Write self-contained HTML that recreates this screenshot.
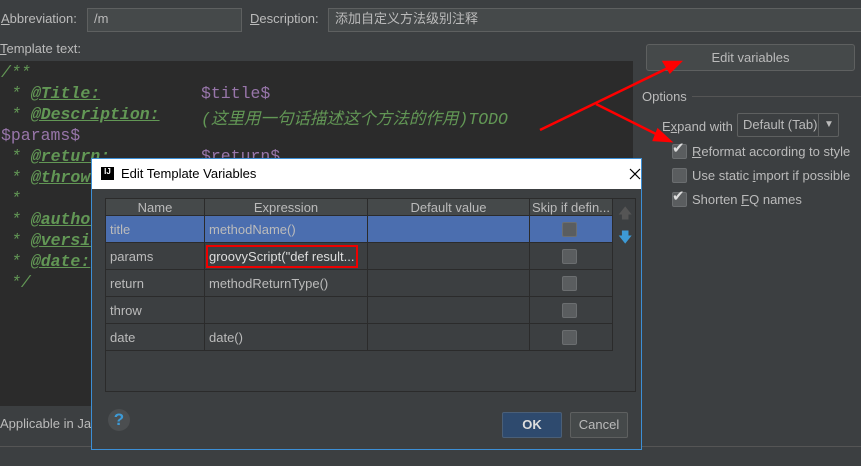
<!DOCTYPE html>
<html><head><meta charset="utf-8"><style>
body{margin:0;width:861px;height:466px;background:#3c3f41;font-family:"Liberation Sans","Noto Sans CJK SC",sans-serif;font-size:13px;color:#bbbbbb;position:relative;overflow:hidden}
.a{position:absolute;white-space:nowrap}
.inp{position:absolute;background:#45494a;border:1px solid #5e6060;box-sizing:border-box;padding-left:6px;line-height:20px;color:#bbb}
.ed{position:absolute;left:0;top:61px;width:633px;height:345px;background:#2b2b2b}
.code{position:absolute;font-family:"Liberation Mono","Noto Sans CJK SC",monospace;font-size:16.5px;white-space:nowrap;font-style:italic;color:#629755}
.tag{font-weight:bold;text-decoration:underline}
.var{color:#9876aa;font-style:normal}
.cb{position:absolute;width:13px;height:13px;background:#5a5d5f;border:1px solid #6b6e70;border-radius:2px}
.dlg{position:absolute;left:91px;top:158px;width:549px;height:290px;border:1px solid #3c8fd6;background:#3c3f41}
table{border-collapse:collapse;position:absolute;left:13px;top:39px;width:507px;table-layout:fixed}
td,th{border:1px solid #2b2b2b;height:26px;padding:0 0 0 4px;font-weight:normal;text-align:left;color:#bbb;font-size:13px;white-space:nowrap;overflow:hidden;position:relative}
th{height:16px;text-align:center;background:#45494a;padding:0}
td .cb{left:32px;top:6px}
</style></head><body>
<div class="a" style="left:1px;top:11px"><u>A</u>bbreviation:</div>
<div class="inp" style="left:87px;top:8px;width:155px;height:24px">/m</div>
<div class="a" style="left:250px;top:11px"><u>D</u>escription:</div>
<div class="inp" style="left:328px;top:8px;width:540px;height:24px">添加自定义方法级别注释</div>
<div class="a" style="left:0;top:41px"><u>T</u>emplate text:</div>
<div class="ed"></div>
<div class="code" style="left:1px;top:63px">/**</div>
<div class="code" style="left:11px;top:84px">* <span class="tag">@Title:</span></div><div class="code var" style="left:201px;top:84px">$title$</div>
<div class="code" style="left:11px;top:105px">* <span class="tag">@Description:</span></div><div class="code" style="left:201px;top:105px">(这里用一句话描述这个方法的作用)TODO</div>
<div class="code var" style="left:1px;top:126px">$params$</div>
<div class="code" style="left:11px;top:147px">* <span class="tag">@return:</span></div><div class="code var" style="left:201px;top:147px">$return$</div>
<div class="code" style="left:11px;top:168px">* <span class="tag">@throws</span></div>
<div class="code" style="left:11px;top:189px">*</div>
<div class="code" style="left:11px;top:210px">* <span class="tag">@author</span></div>
<div class="code" style="left:11px;top:231px">* <span class="tag">@version</span></div>
<div class="code" style="left:11px;top:252px">* <span class="tag">@date:</span></div>
<div class="code" style="left:11px;top:273px">*/</div>
<div class="a" style="left:0;top:416px">Applicable in Java</div>
<div style="position:absolute;left:0;top:446px;width:861px;height:1px;background:#555"></div>
<div class="a" style="left:646px;top:44px;width:207px;height:25px;border:1px solid #5e6060;border-radius:3px;background:#45494a;text-align:center;line-height:25px">Edit variables</div>
<div class="a" style="left:642px;top:89px">Options</div>
<div style="position:absolute;left:692px;top:96px;width:169px;height:1px;background:#555"></div>
<div class="a" style="left:662px;top:119px">E<u>x</u>pand with</div>
<div class="a" style="left:737px;top:113px;width:102px;height:24px;border:1px solid #5e6060;border-radius:2px;box-sizing:border-box;padding-left:5px;line-height:22px">Default (Tab)<span style="position:absolute;left:80px;top:0;width:1px;height:22px;background:#5e6060"></span><span style="position:absolute;left:86px;top:0;font-size:10px">▼</span></div>
<div class="cb" style="left:672px;top:144px"></div><div class="a" style="left:672px;top:139px;font-size:15px;color:#ddd">✔</div><div class="a" style="left:692px;top:144px"><u>R</u>eformat according to style</div>
<div class="cb" style="left:672px;top:168px"></div><div class="a" style="left:692px;top:168px">Use static <u>i</u>mport if possible</div>
<div class="cb" style="left:672px;top:192px"></div><div class="a" style="left:672px;top:187px;font-size:15px;color:#ddd">✔</div><div class="a" style="left:692px;top:192px">Shorten <u>F</u>Q names</div>
<div class="dlg">
<div style="position:absolute;left:0;top:0;width:549px;height:30px;background:#fff"></div>
<div class="a" style="left:9px;top:8px;width:13px;height:13px;background:#000;color:#fff;font-size:8px;font-weight:bold;line-height:10px;text-align:center">IJ</div>
<div class="a" style="left:29px;top:7px;color:#000">Edit Template Variables</div>
<svg class="a" style="left:537px;top:9px" width="12" height="12"><path d="M1 1L11 11M11 1L1 11" stroke="#000" stroke-width="1.2"/></svg>
<div style="position:absolute;left:13px;top:39px;width:531px;height:194px;border:1px solid #2b2b2b;box-sizing:border-box"></div>
<table>
<colgroup><col style="width:99px"><col style="width:163px"><col style="width:162px"><col style="width:83px"></colgroup>
<tr><th>Name</th><th>Expression</th><th>Default value</th><th>Skip if defin...</th></tr>
<tr style="background:#4b6eaf"><td>title</td><td>methodName()</td><td></td><td><div class="cb"></div></td></tr>
<tr><td>params</td><td><span style="border:2px solid #e00;padding:2px 1px;margin-left:-3px;color:#ddd">groovyScript("def result...</span></td><td></td><td><div class="cb"></div></td></tr>
<tr><td>return</td><td>methodReturnType()</td><td></td><td><div class="cb"></div></td></tr>
<tr><td>throw</td><td></td><td></td><td><div class="cb"></div></td></tr>
<tr><td>date</td><td>date()</td><td></td><td><div class="cb"></div></td></tr>
</table>
<div class="a" style="left:526px;top:44px;color:#555;font-size:14px">🡅</div>
<div class="a" style="left:526px;top:68px;color:#3d9ad6;font-size:14px">🡇</div>
<div class="a" style="left:16px;top:250px;width:22px;height:22px;border-radius:50%;background:#4b4e50;color:#3d9ad6;font-weight:bold;font-size:17px;text-align:center;line-height:22px">?</div>
<div class="a" style="left:410px;top:253px;width:58px;height:24px;background:#2e4a6e;border:1px solid #4a5f78;border-radius:2px;text-align:center;line-height:24px;font-weight:bold;color:#ddd">OK</div>
<div class="a" style="left:478px;top:253px;width:56px;height:24px;background:#45494a;border:1px solid #5e6060;border-radius:2px;text-align:center;line-height:24px">Cancel</div>
</div>
<svg style="position:absolute;left:0;top:0" width="861" height="466">
<g stroke="#f00" stroke-width="2.5" fill="#f00">
<line x1="540" y1="130" x2="672" y2="66"/><polygon points="680,62 664,62 670,72"/>
<line x1="596" y1="104" x2="662" y2="137"/><polygon points="670,141 658,130 654,140"/>
</g></svg>
</body></html>
